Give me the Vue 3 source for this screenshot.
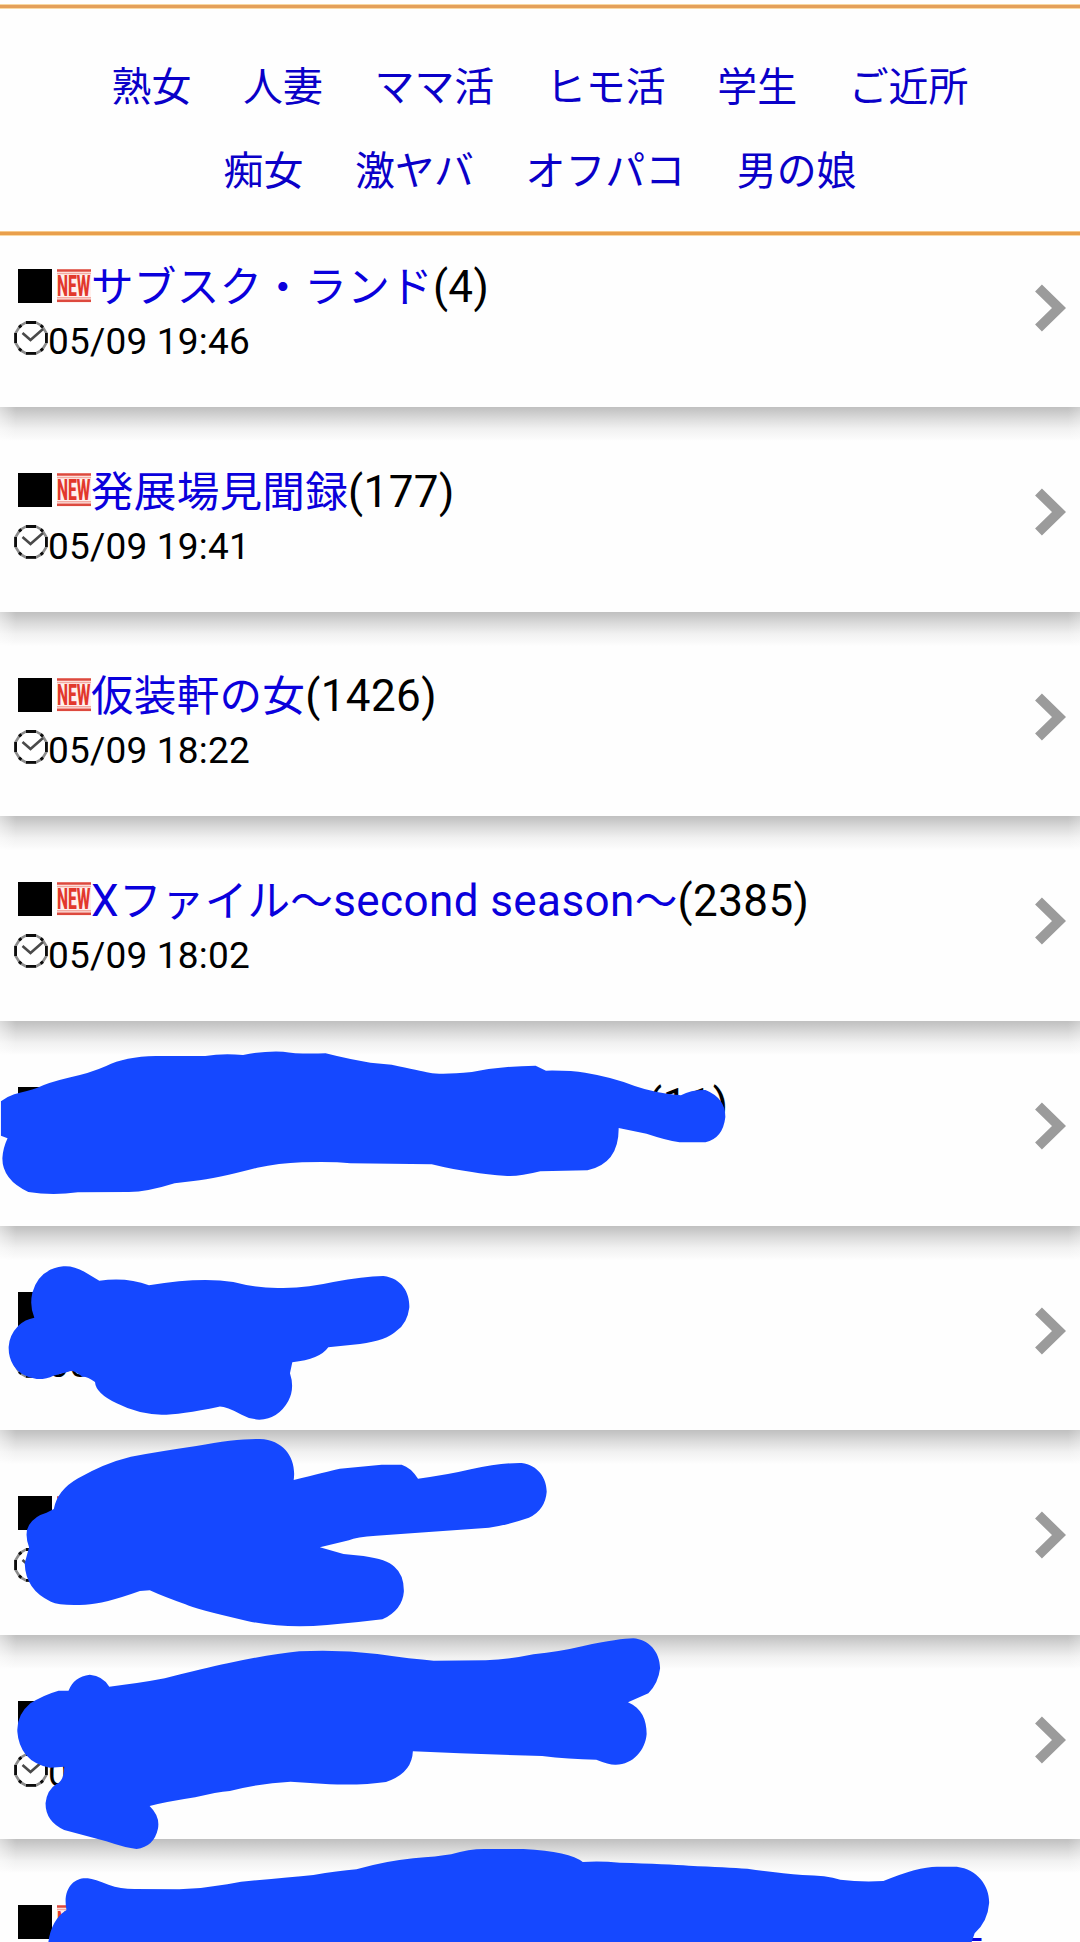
<script setup>
const categoryRows = [
  ['熟女', '人妻', 'ママ活', 'ヒモ活', '学生', 'ご近所'],
  ['痴女', '激ヤバ', 'オフパコ', '男の娘'],
]

// indent: width in px of a title that is fully covered by the marker
const threads = [
  { title: ['サブスク・ランド'], count: '(4)', time: '05/09 19:46' },
  { title: ['発展場見聞録'], count: '(177)', time: '05/09 19:41' },
  { title: ['仮装軒の女'], count: '(1426)', time: '05/09 18:22' },
  { title: ['X', 'ファイル～', 'second season', '～'], count: '(2385)', time: '05/09 18:02' },
  { title: [], indent: 556, count: '(11)', time: '' },
  { title: [], count: '', time: '05' },
  { title: [], count: '', time: '' },
  { title: [], indent: 530, count: ')', time: '0' },
  { title: ['生'], indent: 850, count: '', time: '', last: true },
]

const isLatin = (text) => /^[a-z ]+$/i.test(text)

const strokes = [
  {
    transform: 'translate(0 1030) scale(.4719 .3333)',
    d: 'M2 214 Q15 200 30 193 Q60 182 78 174 Q100 158 145 143 Q190 130 225 108 Q265 80 330 78 L435 78 Q470 70 515 75 Q560 62 600 65 Q630 73 690 70 Q740 88 785 98 L830 104 Q890 122 910 128 Q935 135 1000 126 Q1060 109 1135 107 L1157 122 Q1210 121 1240 128 Q1300 142 1345 168 Q1390 190 1443 196 Q1465 179 1495 180 Q1538 205 1537 262 Q1532 325 1495 337 L1440 337 Q1410 330 1370 311 L1311 294 Q1312 400 1245 421 L1145 424 Q1100 440 1075 438 Q1030 434 1000 426 Q960 419 915 403 L742 400 Q705 394 640 397 Q590 400 545 413 Q460 445 410 453 L370 460 Q310 487 270 486 L165 487 Q110 498 60 486 Q5 450 5 385 Q6 355 16 325 L2 317 Z',
  },
  {
    transform: 'translate(0 1240) scale(.3333)',
    d: 'M103 233 Q88 198 97 158 Q117 87 190 79 Q220 76 258 98 L298 122 Q380 110 447 136 Q600 110 700 126 Q780 147 850 144 Q930 142 1000 126 Q1090 109 1150 108 C1210 115 1230 165 1228 203 Q1222 250 1190 272 Q1160 301 1080 312 L985 322 Q960 358 877 367 L870 400 Q885 445 865 483 Q835 537 778 539 Q747 537 725 524 Q675 498 657 500 Q540 524 485 524 Q415 523 350 490 Q287 460 285 426 Q262 409 247 410 Q220 388 205 395 L160 407 Q140 418 110 417 Q60 410 40 376 Q25 350 26 320 Q28 285 55 257 Q75 238 103 233 Z',
  },
  {
    transform: 'translate(0 1420) scale(.3635 .3333)',
    d: 'M148 267 Q158 210 215 175 Q285 130 360 110 Q440 94 540 78 Q650 55 715 57 C785 60 816 120 808 180 Q900 155 935 146 L1050 134 L1105 134 Q1130 142 1150 176 Q1230 165 1295 148 Q1380 128 1435 129 C1480 135 1504 175 1504 215 Q1500 270 1455 293 Q1390 317 1345 323 L1170 337 L1035 347 Q980 350 960 361 L880 382 L945 402 L1000 408 Q1065 418 1085 440 Q1112 465 1111 515 Q1107 570 1052 598 Q980 608 900 615 Q785 627 680 603 Q535 567 510 553 Q450 530 412 511 L385 513 Q285 552 235 554 Q165 558 140 545 Q70 510 68 430 L80 382 Q66 340 80 315 Q95 288 128 278 Z',
  },
  {
    transform: 'translate(0 1620) scale(.4337 .3333)',
    d: 'M40 335 Q38 285 70 250 Q100 225 135 212 L158 212 Q170 170 207 164 Q238 168 252 200 Q320 190 380 175 Q470 145 525 130 Q620 103 690 94 Q780 88 870 102 Q950 117 1000 122 L1120 121 Q1180 117 1230 103 Q1290 95 1345 78 Q1430 55 1460 55 C1495 58 1522 95 1522 145 Q1518 190 1495 220 L1448 247 C1480 265 1491 300 1491 342 C1488 390 1460 434 1420 434 Q1405 435 1375 419 Q1310 418 1250 408 L1060 400 L952 394 Q950 460 890 486 Q840 496 760 493 L670 485 Q600 490 530 513 Q500 516 450 532 Q385 545 345 558 Q370 590 364 627 Q355 680 315 687 Q290 684 245 664 L148 630 Q105 605 105 550 Q108 510 130 492 Q147 485 148 440 L115 443 Q80 435 60 405 Q42 375 40 335 Z',
  },
  {
    transform: 'translate(0 1830) scale(.3444 .3333)',
    d: 'M140 340 Q148 270 193 240 C180 170 220 140 255 145 Q275 148 315 164 Q350 177 390 177 L520 178 Q590 176 660 163 L700 155 Q830 143 910 135 Q980 123 1035 118 Q1120 93 1200 85 Q1270 80 1310 73 Q1365 56 1410 57 L1520 57 Q1655 65 1692 96 Q1740 92 1800 98 Q1940 102 2000 107 Q2110 112 2170 116 Q2260 129 2330 135 Q2400 136 2440 149 Q2500 157 2565 153 Q2670 108 2725 110 L2778 110 C2840 118 2874 170 2872 220 Q2868 275 2830 310 L2820 340 Z',
  },
]
</script>

<template>
  <main class="page">
    <nav class="categories">
      <div v-for="(row, i) in categoryRows" :key="i" class="category-row">
        <a v-for="name in row" :key="name">{{ name }}</a>
      </div>
    </nav>

    <ul class="threads">
      <li v-for="(t, i) in threads" :key="i" class="thread">
        <div class="body">
          <div class="title">
            <span class="square"></span>
            <svg class="new" viewBox="0 0 34 34">
              <rect width="34" height="34" fill="#fff0ed" />
              <path d="M0 1.5H34M0 31.7H34" stroke="#dd493e" stroke-width="2.6" />
              <path d="M0 4.5H34M0 28.8H34" stroke="#f3aaa2" stroke-width="1.4" />
              <text x="0" y="27" textLength="33.5" lengthAdjust="spacingAndGlyphs">NEW</text>
            </svg>
            <span class="label" :style="t.indent ? { marginLeft: t.indent + 'px' } : null"><a><span v-for="(part, k) in t.title" :key="k" :class="{ latin: isLatin(part) }">{{ part }}</span></a><span class="latin">{{ t.count }}</span></span>
          </div>
          <div class="date">
            <svg class="clock" viewBox="0 0 34 34">
              <path d="M12 1.5H22L28 5L32.4 12V22L28 29L22 32.4H12L6 29L1.6 22V12L6 5Z" fill="#fff" stroke="#8c8c8c" stroke-width="2.6" />
              <path d="M12 1.5H22M32.4 12V22M22 32.4H12M1.6 22V12M5 6.4l2.4-2M26.6 4.4l2.4 2M5 27.6l2.4 2M26.6 29.6l2.4-2" fill="none" stroke="#0c0c0c" stroke-width="2.8" />
              <path d="M8.5 12L16.5 19L29 8" fill="none" stroke="#4a4a4a" stroke-width="2.6" />
            </svg>
            <span class="time">{{ t.time }}</span>
          </div>
        </div>
        <svg v-if="!t.last" class="chevron" viewBox="0 0 31 50">
          <path d="M3.5 5L24 25L3.5 45" fill="none" stroke="#9b9b9b" stroke-width="9.8" />
        </svg>
      </li>
    </ul>

    <svg class="marker" viewBox="0 0 1080 1942">
      <path v-for="(s, i) in strokes" :key="i" :d="s.d" :transform="s.transform" />
    </svg>
  </main>
</template>

<style>
body {
  margin: 0;
  background: #fff;
}
</style>

<style scoped>
.page {
  position: relative;
  width: 1080px;
  height: 1942px;
  overflow: hidden;
  box-sizing: border-box;
  padding-top: 4px;
  background: #fefefe;
  color: #000;
  font-family: Roboto, "Noto Sans CJK JP", sans-serif;
}
.categories {
  height: 232px;
  box-sizing: border-box;
  padding-top: 42px;
  background:
    linear-gradient(#f7d7a0 1px, #e4a05a 1px 4px, #f9d9a4 4px) top / 100% 5px no-repeat,
    linear-gradient(#f7c98a 1px, #e99f4c 1px 4px, #f9d9a4 4px) bottom / 100% 5px no-repeat;
}
.category-row {
  display: flex;
  justify-content: center;
  gap: 51.7px;
  height: 83.5px;
  line-height: 83.5px;
  font-size: 39.9px;
}
a {
  color: #0a00c8;
}
.threads {
  margin: 0;
  padding: 0;
  list-style: none;
}
.thread {
  display: flex;
  justify-content: space-between;
  height: 204.64px;
  box-sizing: border-box;
  padding: 58px 14px 0;
  background:
    linear-gradient(90deg, rgba(255, 255, 255, .45), rgba(255, 255, 255, 0) 16px calc(100% - 12px), rgba(255, 255, 255, .25)) top / 100% 34px no-repeat,
    linear-gradient(#c0c0c0, #c6c6c6 3px, #dcdcdc 12px, #f1f1f1 22px, #fafafa 31px, #fefefe 34px) top / 100% 34px no-repeat;
}
.thread:first-child {
  height: 171px;
  padding-top: 24.5px;
  background: none;
}
.title {
  display: flex;
  align-items: center;
  height: 50px;
  padding-left: 4px;
}
.square {
  flex: none;
  width: 34px;
  height: 34px;
  background: #000;
}
.new {
  flex: none;
  width: 34px;
  height: 34px;
  margin-left: 5px;
}
.new text {
  font: 800 29px Roboto, sans-serif;
  fill: #e2382c;
}
.label {
  font-size: 42.6px;
  line-height: 50px;
  padding-top: 3px;
  white-space: nowrap;
}
.label a {
  color: #0a00dc;
  letter-spacing: .25px;
}
.label .latin {
  font-size: 44px;
  line-height: 1;
  letter-spacing: .4px;
}
.date {
  display: flex;
  align-items: center;
  height: 42px;
  margin-top: 6px;
}
.clock {
  flex: none;
  width: 34px;
  height: 34px;
}
.time {
  font-size: 37px;
  line-height: 42px;
  padding-top: 9px;
  letter-spacing: .2px;
}
.chevron {
  flex: none;
  width: 31px;
  height: 50px;
  margin-top: 22px;
}
.marker {
  position: absolute;
  top: 0;
  left: 0;
  width: 1080px;
  height: 1942px;
  fill: #1548ff;
}
</style>
